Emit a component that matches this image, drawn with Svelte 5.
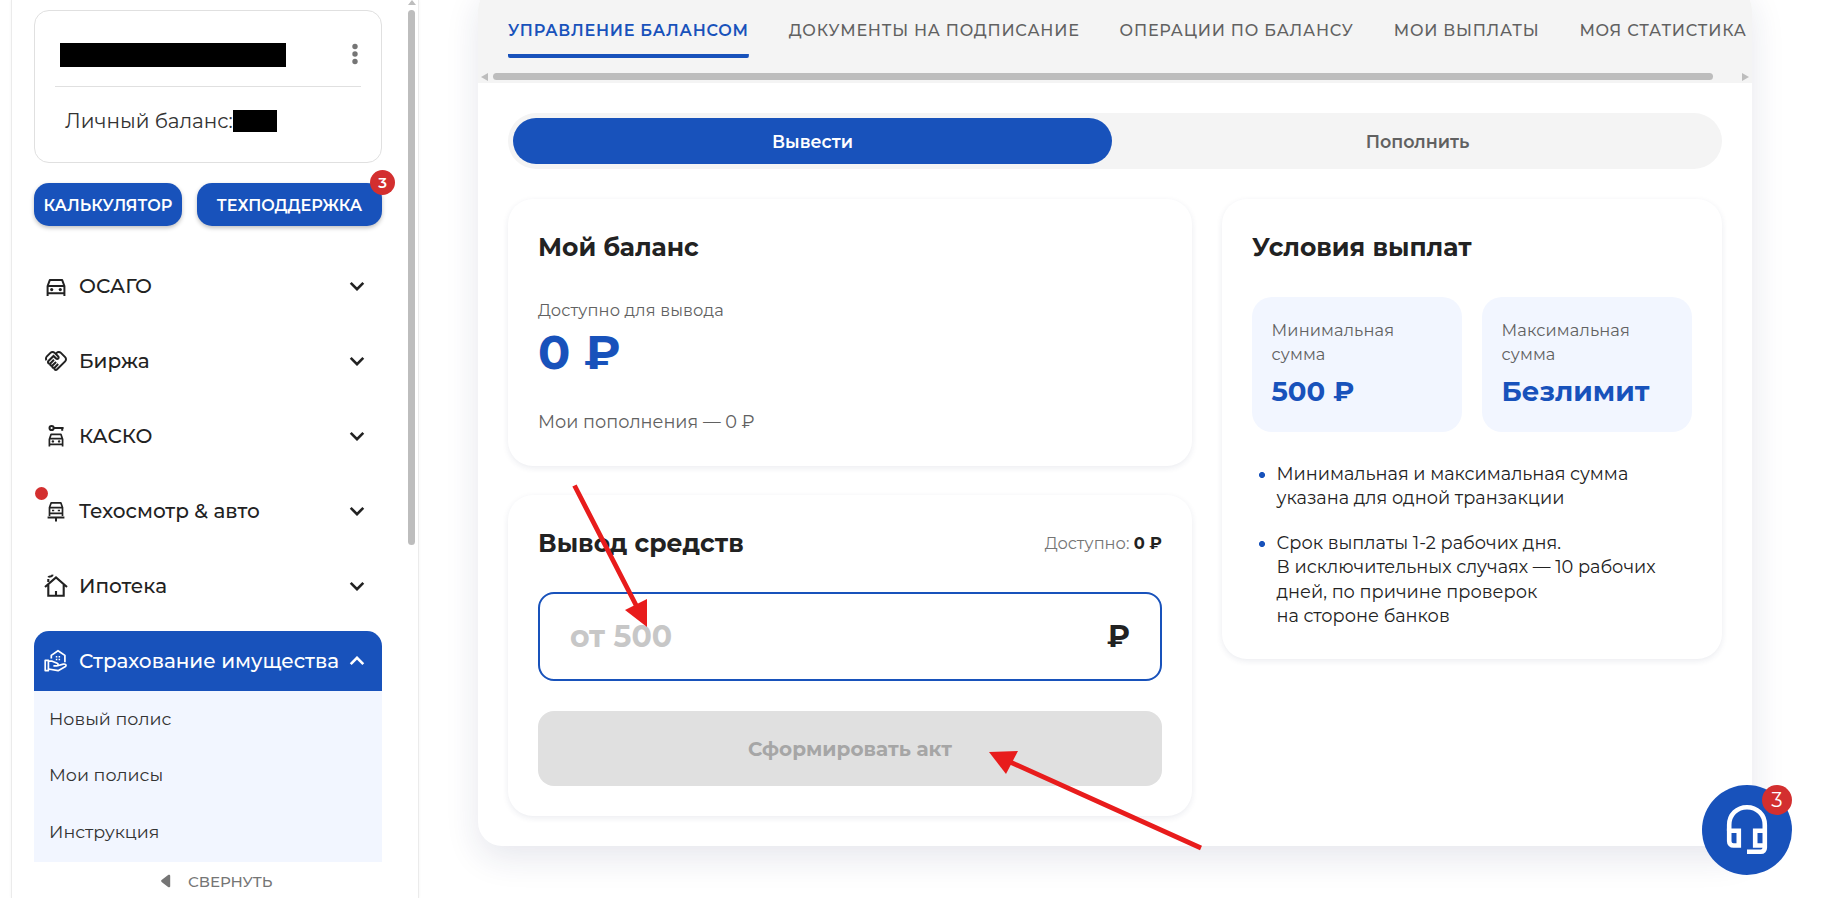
<script lang="ts">
  let menu = [
    { id: 1, title: "ОСАГО", icon: "car" },
    { id: 2, title: "Биржа", icon: "handshake" },
    { id: 3, title: "КАСКО", icon: "key" },
    { id: 4, title: "Техосмотр & авто", icon: "lift", dot: true },
    { id: 5, title: "Ипотека", icon: "house" },
    {
      id: 6,
      title: "Страхование имущества",
      icon: "property",
      children: ["Новый полис", "Мои полисы", "Инструкция"],
    },
  ];

  let tabs = [
    "Управление балансом",
    "Документы на подписание",
    "Операции по балансу",
    "Мои выплаты",
    "Моя статистика",
  ];

  let limits = [
    { label: "Минимальная сумма", value: "500 ₽" },
    { label: "Максимальная сумма", value: "Безлимит" },
  ];

  let openItem = 6;
  let activeTab = 0;
  let mode = "withdraw";
  let amount = "";
  let unread = 3;

  const toggleItem = (id: number) => {
    openItem = openItem === id ? 0 : id;
  };
</script>

<div class="page">
  <aside class="sidebar">
    <div class="sidebar-body">
      <div class="sidebar-content">
        <div class="profile">
          <div class="profile-top">
            <span class="hidden-name"></span>
            <svg class="dots" width="6" height="22" viewBox="0 0 6 22">
              <circle cx="3" cy="3.5" r="2.7" />
              <circle cx="3" cy="11" r="2.7" />
              <circle cx="3" cy="18.5" r="2.7" />
            </svg>
          </div>
          <div class="profile-balance">
            <span>Личный баланс:</span><span class="hidden-sum"></span>
          </div>
        </div>

        <div class="quick">
          <button class="quick-button calc">КАЛЬКУЛЯТОР</button>
          <button class="quick-button support">
            ТЕХПОДДЕРЖКА
            <span class="badge">{unread}</span>
          </button>
        </div>

        <nav class="menu">
          {#each menu as item (item.id)}
            <div class="menu-group">
              <button
                class="menu-item"
                class:open={openItem === item.id}
                on:click={() => toggleItem(item.id)}
              >
                {#if item.dot}
                  <span class="menu-dot"></span>
                {/if}
                <svg class="menu-icon" width="24" height="24" viewBox="0 0 24 24">
                  {#if item.icon === "car"}
                    <path class="line bold" d="M3.6 22V12L5.8 6.1h12.4L20.4 12v10M3.6 12h16.8M3.6 19.2h16.8" />
                    <circle cx="7.7" cy="15.6" r="1.6" />
                    <circle cx="16.3" cy="15.6" r="1.6" />
                  {:else if item.icon === "handshake"}
                    <path
                      d="M12.22 19.85c-.18.18-.5.21-.71 0-.18-.18-.21-.5 0-.71l3.39-3.39-1.41-1.41-3.39 3.39c-.19.2-.51.19-.71 0-.21-.21-.18-.53 0-.71l3.39-3.39-1.41-1.41-3.39 3.39c-.18.18-.5.21-.71 0-.19-.19-.19-.51 0-.71l3.39-3.39-1.42-1.41-3.39 3.39c-.18.18-.5.21-.71 0-.19-.2-.19-.51 0-.71L9.52 8.4l1.87 1.86c.95.95 2.59.94 3.54 0 .98-.98.98-2.56 0-3.54l-1.86-1.86.28-.28c.78-.78 2.05-.78 2.83 0l4.24 4.24c.78.78.78 2.05 0 2.83l-8.2 8.2zm9.61-6.78c1.56-1.56 1.56-4.09 0-5.66l-4.24-4.24c-1.56-1.56-4.09-1.56-5.66 0l-.28.28-.28-.28c-1.56-1.56-4.09-1.56-5.66 0L2.17 6.71C.75 8.13.62 10.34 1.77 11.9l1.45-1.45c-.39-.75-.26-1.7.37-2.33l3.54-3.54c.78-.78 2.05-.78 2.83 0l3.56 3.56c.18.18.21.5 0 .71-.21.21-.53.18-.71 0L9.52 5.57l-5.8 5.79c-.98.97-.98 2.56 0 3.54.39.39.89.63 1.42.7.07.52.3 1.02.7 1.42s.9.63 1.42.7c.07.52.3 1.02.7 1.42.4.4.9.63 1.42.7.07.54.31 1.03.7 1.42.47.47 1.1.73 1.77.73.67 0 1.3-.26 1.77-.73l8.21-8.19z"
                    />
                  {:else if item.icon === "key"}
                    <circle class="line bold" cx="7.6" cy="4" r="2.1" />
                    <path class="line bold" d="M9.7 4h9.9M18.2 4v2.8" />
                    <path class="line" d="M5.4 22.6v-7.4l1.7-4.9h9.8l1.7 4.9v7.4M5.4 14.6h13.2M5.4 20.3h13.2" />
                    <circle cx="8.9" cy="17.4" r="1.2" />
                    <circle cx="15.1" cy="17.4" r="1.2" />
                  {:else if item.icon === "lift"}
                    <path class="line" d="M5.5 17V8.6l1.6-4.7h9.8l1.6 4.7V17M5.5 8.6h13M5.5 14.4h13" />
                    <path class="line bold" d="M3.6 18.6h16.8M12 18.6v4" />
                    <path class="line" d="M8 11.5h2.2M13.8 11.5H16" />
                  {:else if item.icon === "house"}
                    <path class="line thick" d="M1 13 12 3.4 23 13M4.3 10.8v10.9h15.4V10.8M12 17v4" />
                    <path class="line thick" d="M4.3 8V5M4.4 3.4c.6-1.7 2-.4 3.2-1.2.7-.4.9-.9 1-1.5" />
                  {:else}
                    <path class="line" d="M1.2 11.4h3.2v10.2H1.2zM4.4 12.2h3.8l5 2.1c1.6.7 1 2.5-.5 2.5H9.4" />
                    <path class="line" d="m13.5 16.8 5.8-1.7c2-.5 3.6 1.2 2.2 2.4l-7.4 4.2L4.4 20" />
                    <path class="line" d="M7.3 9.5V6.4L14 1.7l6.9 4.7v6.8" />
                    <path d="M11.8 7h1.5v1.5h-1.5zM14.6 7h1.5v1.5h-1.5zM11.8 9.8h1.5v1.5h-1.5zM14.6 9.8h1.5v1.5h-1.5z" />
                  {/if}
                </svg>
                <span class="menu-title">{item.title}</span>
                <svg class="chevron" width="16" height="10" viewBox="0 0 16 10">
                  {#if openItem === item.id}
                    <path d="m1.7 8.2 6.3-6.4 6.3 6.4" />
                  {:else}
                    <path d="m1.7 1.8 6.3 6.4 6.3-6.4" />
                  {/if}
                </svg>
              </button>
              {#if item.children && openItem === item.id}
                <div class="submenu">
                  {#each item.children as child}
                    <a class="submenu-item" href="#top">{child}</a>
                  {/each}
                </div>
              {/if}
            </div>
          {/each}
        </nav>
      </div>

      <div class="side-scroll">
        <span class="scroll-up"></span>
        <span class="side-thumb"></span>
      </div>
    </div>

    <button class="collapse">
      <svg width="10" height="14" viewBox="0 0 10 14">
        <path d="M9.2 1.8v10.4c0 1.2-1.3 1.5-2.1.8L.9 8.2a1.5 1.5 0 0 1 0-2.4L7.1 1c.8-.7 2.1-.4 2.1.8z" />
      </svg>
      СВЕРНУТЬ
    </button>
  </aside>

  <main class="panel">
    <header class="tabs-bar">
      <div class="tabs">
        {#each tabs as tab, i}
          <button
            class="tab"
            class:active={activeTab === i}
            on:click={() => (activeTab = i)}
          >
            {tab}
          </button>
        {/each}
      </div>
      <div class="tabs-scroll">
        <span class="scroll-left"></span>
        <span class="tabs-thumb"></span>
        <span class="scroll-right"></span>
      </div>
    </header>

    <div class="content">
      <div class="switch">
        <button
          class="switch-button"
          class:active={mode === "withdraw"}
          on:click={() => (mode = "withdraw")}
        >
          Вывести
        </button>
        <button
          class="switch-button"
          class:active={mode === "deposit"}
          on:click={() => (mode = "deposit")}
        >
          Пополнить
        </button>
      </div>

      <div class="columns">
        <div class="left">
          <section class="card balance">
            <h2>Мой баланс</h2>
            <p class="balance-label">Доступно для вывода</p>
            <p class="balance-value">0 ₽</p>
            <p class="balance-deposits">Мои пополнения — 0 ₽</p>
          </section>

          <section class="card">
            <div class="card-head">
              <h2>Вывод средств</h2>
              <span class="available">Доступно: <b>0 ₽</b></span>
            </div>
            <label class="amount">
              <input type="text" placeholder="от 500" bind:value={amount} />
              <span>₽</span>
            </label>
            <button class="submit" disabled>Сформировать акт</button>
          </section>
        </div>

        <section class="card terms">
          <h2>Условия выплат</h2>
          <div class="limits">
            {#each limits as limit}
              <div class="limit">
                <p class="limit-label">{limit.label}</p>
                <p class="limit-value">{limit.value}</p>
              </div>
            {/each}
          </div>
          <ul>
            <li>Минимальная и максимальная сумма<br />указана для одной транзакции</li>
            <li>
              Срок выплаты 1-2 рабочих дня.<br />В исключительных случаях — 10 рабочих<br />дней, по причине
              проверок<br />на стороне банков
            </li>
          </ul>
        </section>
      </div>
    </div>
  </main>

  <svg class="arrows" width="1825" height="898" viewBox="0 0 1825 898">
    <path d="M574.5 485.5 637.5 608M1201 848 1008 761" />
    <polygon points="625,610 647,599 647,627" />
    <polygon points="989,752 1018,751 1006,774" />
  </svg>

  <button class="fab" aria-label="Поддержка">
    <svg width="42" height="52" viewBox="0 0 42 52">
      <path d="M3.2 27v-6C3.2 10.5 11 3.2 21 3.2S38.8 10.5 38.8 21v22.5c0 2.5-1.5 4.3-4 4.3H21" />
      <path d="M3.2 26.8h9.6v14.7H7.5c-2.6 0-4.3-1.7-4.3-4.3zM38.8 26.8h-9.6v14.7h9.6" />
    </svg>
    <span class="fab-badge">{unread}</span>
  </button>
</div>

<style>
  :global(body) {
    margin: 0;
    overflow: hidden;
    background: #fff;
  }

  .page {
    position: relative;
    display: flex;
    align-items: flex-start;
    height: 898px;
    overflow: hidden;
    font-family: Montserrat, Inter, "Open Sans", sans-serif;
    color: #222;
  }

  button {
    padding: 0;
    border: none;
    background: none;
    font-family: inherit;
    color: inherit;
    cursor: pointer;
  }

  h2,
  p,
  ul {
    margin: 0;
    padding: 0;
  }

  .sidebar {
    display: flex;
    flex-direction: column;
    flex: none;
    box-sizing: border-box;
    width: 408px;
    height: 898px;
    margin-left: 11px;
    border-left: 1px solid #ebebeb;
    border-right: 1px solid #ebebeb;
    box-shadow: 0 0 3px rgba(0, 0, 0, 0.05);
  }

  .sidebar-body {
    display: flex;
    height: 862px;
    padding-left: 22px;
  }

  .sidebar-content {
    width: 348px;
    padding-top: 10px;
  }

  .profile {
    box-sizing: border-box;
    height: 153px;
    padding: 0 20px;
    border: 1px solid #e0e0e0;
    border-radius: 15px;
  }

  .profile-top {
    display: flex;
    align-items: center;
    justify-content: space-between;
    height: 75px;
    padding: 0 3px 0 5px;
    border-bottom: 1px solid #e0e0e0;
  }

  .hidden-name {
    align-self: flex-start;
    width: 226px;
    height: 24px;
    margin-top: 32px;
    background: #000;
  }

  .dots {
    margin-top: 10px;
    fill: #757575;
  }

  .profile-balance {
    display: flex;
    align-items: center;
    height: 67px;
    padding-left: 10px;
    font-size: 20px;
    color: #333;
  }

  .hidden-sum {
    width: 44px;
    height: 22px;
    background: #000;
  }

  .quick {
    display: flex;
    gap: 15px;
    margin-top: 20px;
  }

  .quick-button {
    position: relative;
    height: 43px;
    padding-top: 1px;
    border-radius: 15px;
    background: #1852bb;
    box-shadow: 0 2px 4px rgba(0, 0, 0, 0.25);
    color: #fff;
    font-size: 16px;
    font-weight: 600;
  }

  .calc {
    width: 148px;
  }

  .support {
    width: 185px;
  }

  .badge {
    position: absolute;
    top: -13px;
    right: -13px;
    width: 25px;
    height: 25px;
    border-radius: 50%;
    background: #d32f2f;
    font-size: 15px;
    line-height: 26px;
  }

  .menu {
    display: flex;
    flex-direction: column;
    gap: 15px;
    margin-top: 30px;
  }

  .menu-item {
    position: relative;
    display: flex;
    align-items: center;
    width: 100%;
    height: 60px;
    padding: 0 17px 0 10px;
    font-size: 20px;
    font-weight: 500;
    text-align: left;
  }

  .menu-item.open {
    border-radius: 15px 15px 0 0;
    background: #1852bb;
    color: #fff;
  }

  .menu-dot {
    position: absolute;
    top: 6px;
    left: 1px;
    width: 13px;
    height: 13px;
    border-radius: 50%;
    background: #d32f2f;
  }

  .menu-icon {
    flex: none;
    fill: currentColor;
  }

  .menu-icon .line {
    fill: none;
    stroke: currentColor;
    stroke-width: 1.7;
    stroke-linejoin: round;
  }

  .menu-icon .bold {
    stroke-width: 2;
  }

  .menu-icon .thick {
    stroke-width: 2.1;
    stroke-linejoin: miter;
  }

  .menu-title {
    flex: 1;
    padding-left: 11px;
    white-space: nowrap;
  }

  .chevron {
    flex: none;
    fill: none;
    stroke: currentColor;
    stroke-width: 2.6;
  }

  .submenu {
    height: 171px;
    background: #f2f6ff;
  }

  .submenu-item {
    display: block;
    height: 56.4px;
    padding-left: 15px;
    color: #333;
    font-size: 17.5px;
    line-height: 56.4px;
    text-decoration: none;
  }

  .side-scroll {
    display: flex;
    flex-direction: column;
    align-items: center;
    width: 9px;
    margin-left: 25px;
  }

  .scroll-up {
    border: 4px solid transparent;
    border-top: none;
    border-bottom: 5px solid #bdbdbd;
  }

  .side-thumb {
    width: 7px;
    height: 535px;
    margin-top: 5px;
    border-radius: 4px;
    background: #bdbdbd;
  }

  .collapse {
    display: flex;
    align-items: center;
    gap: 17px;
    height: 36px;
    padding: 2px 0 0 149px;
    color: #757575;
    font-size: 15px;
    font-weight: 500;
  }

  .collapse svg {
    fill: #757575;
  }

  .panel {
    flex: none;
    width: 1274px;
    height: 860px;
    margin: -14px 0 0 59px;
    border-radius: 24px;
    background: #fff;
    box-shadow: 0 12px 34px rgba(30, 40, 90, 0.11);
  }

  .tabs-bar {
    height: 97px;
    border-radius: 24px 24px 0 0;
    background: #f4f4f4;
  }

  .tabs {
    display: flex;
    gap: 40px;
    box-sizing: border-box;
    height: 87px;
    padding: 31px 0 0 30px;
    overflow: hidden;
  }

  .tab {
    flex: none;
    box-sizing: border-box;
    height: 41px;
    padding-bottom: 13px;
    color: #616161;
    font-size: 16px;
    font-weight: 500;
    line-height: 24px;
    letter-spacing: 0.79px;
    text-transform: uppercase;
    white-space: nowrap;
  }

  .tab.active {
    border-radius: 2px;
    background: linear-gradient(#1852bb, #1852bb) bottom / 100% 4px no-repeat;
    color: #1852bb;
    font-weight: 600;
    letter-spacing: 0.75px;
  }

  .tabs-scroll {
    display: flex;
    align-items: center;
    height: 7px;
    padding: 0 3px;
  }

  .scroll-left {
    border: 4px solid transparent;
    border-left: none;
    border-right: 7px solid #bdbdbd;
  }

  .tabs-thumb {
    width: 1220px;
    height: 7px;
    margin-left: 5px;
    border-radius: 4px;
    background: #bdbdbd;
  }

  .scroll-right {
    margin-left: auto;
    border: 4px solid transparent;
    border-right: none;
    border-left: 7px solid #bdbdbd;
  }

  .content {
    padding: 30px;
  }

  .switch {
    display: grid;
    grid-template-columns: 1fr 1fr;
    gap: 6px;
    box-sizing: border-box;
    height: 56px;
    padding: 5px;
    border-radius: 28px;
    background: #f4f4f4;
  }

  .switch-button {
    border-radius: 23px;
    color: #616161;
    font-size: 17.5px;
    font-weight: 600;
  }

  .switch-button.active {
    background: #1852bb;
    color: #fff;
  }

  .columns {
    display: flex;
    align-items: flex-start;
    gap: 30px;
    margin-top: 30px;
  }

  .left {
    display: flex;
    flex-direction: column;
    gap: 29px;
    width: 684px;
  }

  .card {
    padding: 30px;
    border-radius: 25px;
    background: #fff;
    box-shadow: 0 2px 6px rgba(30, 40, 90, 0.09);
  }

  h2 {
    font-size: 25px;
    font-weight: 700;
    line-height: 36px;
  }

  .balance {
    height: 207px;
  }

  .balance-label {
    margin-top: 33px;
    color: #616161;
    font-size: 16.25px;
    line-height: 24px;
    letter-spacing: 0.15px;
  }

  .balance-value {
    margin-top: 2px;
    color: #1852bb;
    font-size: 47.6px;
    font-weight: 700;
    line-height: 56px;
  }

  .balance-deposits {
    margin-top: 30px;
    color: #616161;
    font-size: 17.7px;
    line-height: 24px;
  }

  .card-head {
    display: flex;
    align-items: center;
    justify-content: space-between;
  }

  .available {
    color: #757575;
    font-size: 16.3px;
  }

  .available b {
    color: #222;
  }

  .amount {
    display: flex;
    align-items: center;
    box-sizing: border-box;
    height: 89px;
    margin-top: 31px;
    padding: 0 30px;
    border: 2px solid #1852bb;
    border-radius: 16px;
    font-size: 30px;
    font-weight: 700;
  }

  .amount input {
    flex: 1;
    min-width: 0;
    padding: 0;
    border: none;
    outline: none;
    font: inherit;
    color: inherit;
  }

  .amount input::placeholder {
    color: #c7c7c7;
  }

  .submit {
    display: block;
    width: 100%;
    height: 75px;
    margin-top: 30px;
    border-radius: 16px;
    background: #e0e0e0;
    color: #a6a6a6;
    font-size: 20px;
    font-weight: 700;
  }

  .terms {
    box-sizing: border-box;
    width: 500px;
    height: 460px;
  }

  .limits {
    display: grid;
    grid-template-columns: 210px 210px;
    gap: 20px;
    margin-top: 32px;
  }

  .limit {
    box-sizing: border-box;
    height: 135px;
    padding: 21px 20px 0 19.5px;
    border-radius: 20px;
    background: #f2f6ff;
  }

  .limit-label {
    width: 140px;
    color: #616161;
    font-size: 16.25px;
    line-height: 24px;
    letter-spacing: 0.15px;
  }

  .limit-value {
    margin-top: 8px;
    color: #1852bb;
    font-size: 27.5px;
    font-weight: 700;
    line-height: 34px;
  }

  ul {
    display: flex;
    flex-direction: column;
    gap: 20px;
    margin-top: 30px;
    list-style: none;
  }

  li {
    padding-left: 24.5px;
    background: radial-gradient(circle at 10px 13px, #1852bb 2.7px, transparent 3.3px);
    font-size: 17.75px;
    line-height: 24.4px;
    white-space: nowrap;
  }

  .arrows {
    position: absolute;
    top: 0;
    left: 0;
    pointer-events: none;
    fill: #e81c1c;
  }

  .arrows path {
    fill: none;
    stroke: #e81c1c;
    stroke-width: 4.8;
  }

  .fab {
    position: absolute;
    top: 785px;
    left: 1702px;
    display: flex;
    align-items: center;
    justify-content: center;
    width: 90px;
    height: 90px;
    border-radius: 50%;
    background: #1852bb;
    color: #fff;
  }

  .fab svg {
    fill: none;
    stroke: #fff;
    stroke-width: 4.6;
  }

  .fab-badge {
    position: absolute;
    top: 0;
    right: 0;
    width: 30px;
    height: 30px;
    border-radius: 50%;
    background: #d32f2f;
    font-size: 20px;
    line-height: 31px;
  }
</style>
